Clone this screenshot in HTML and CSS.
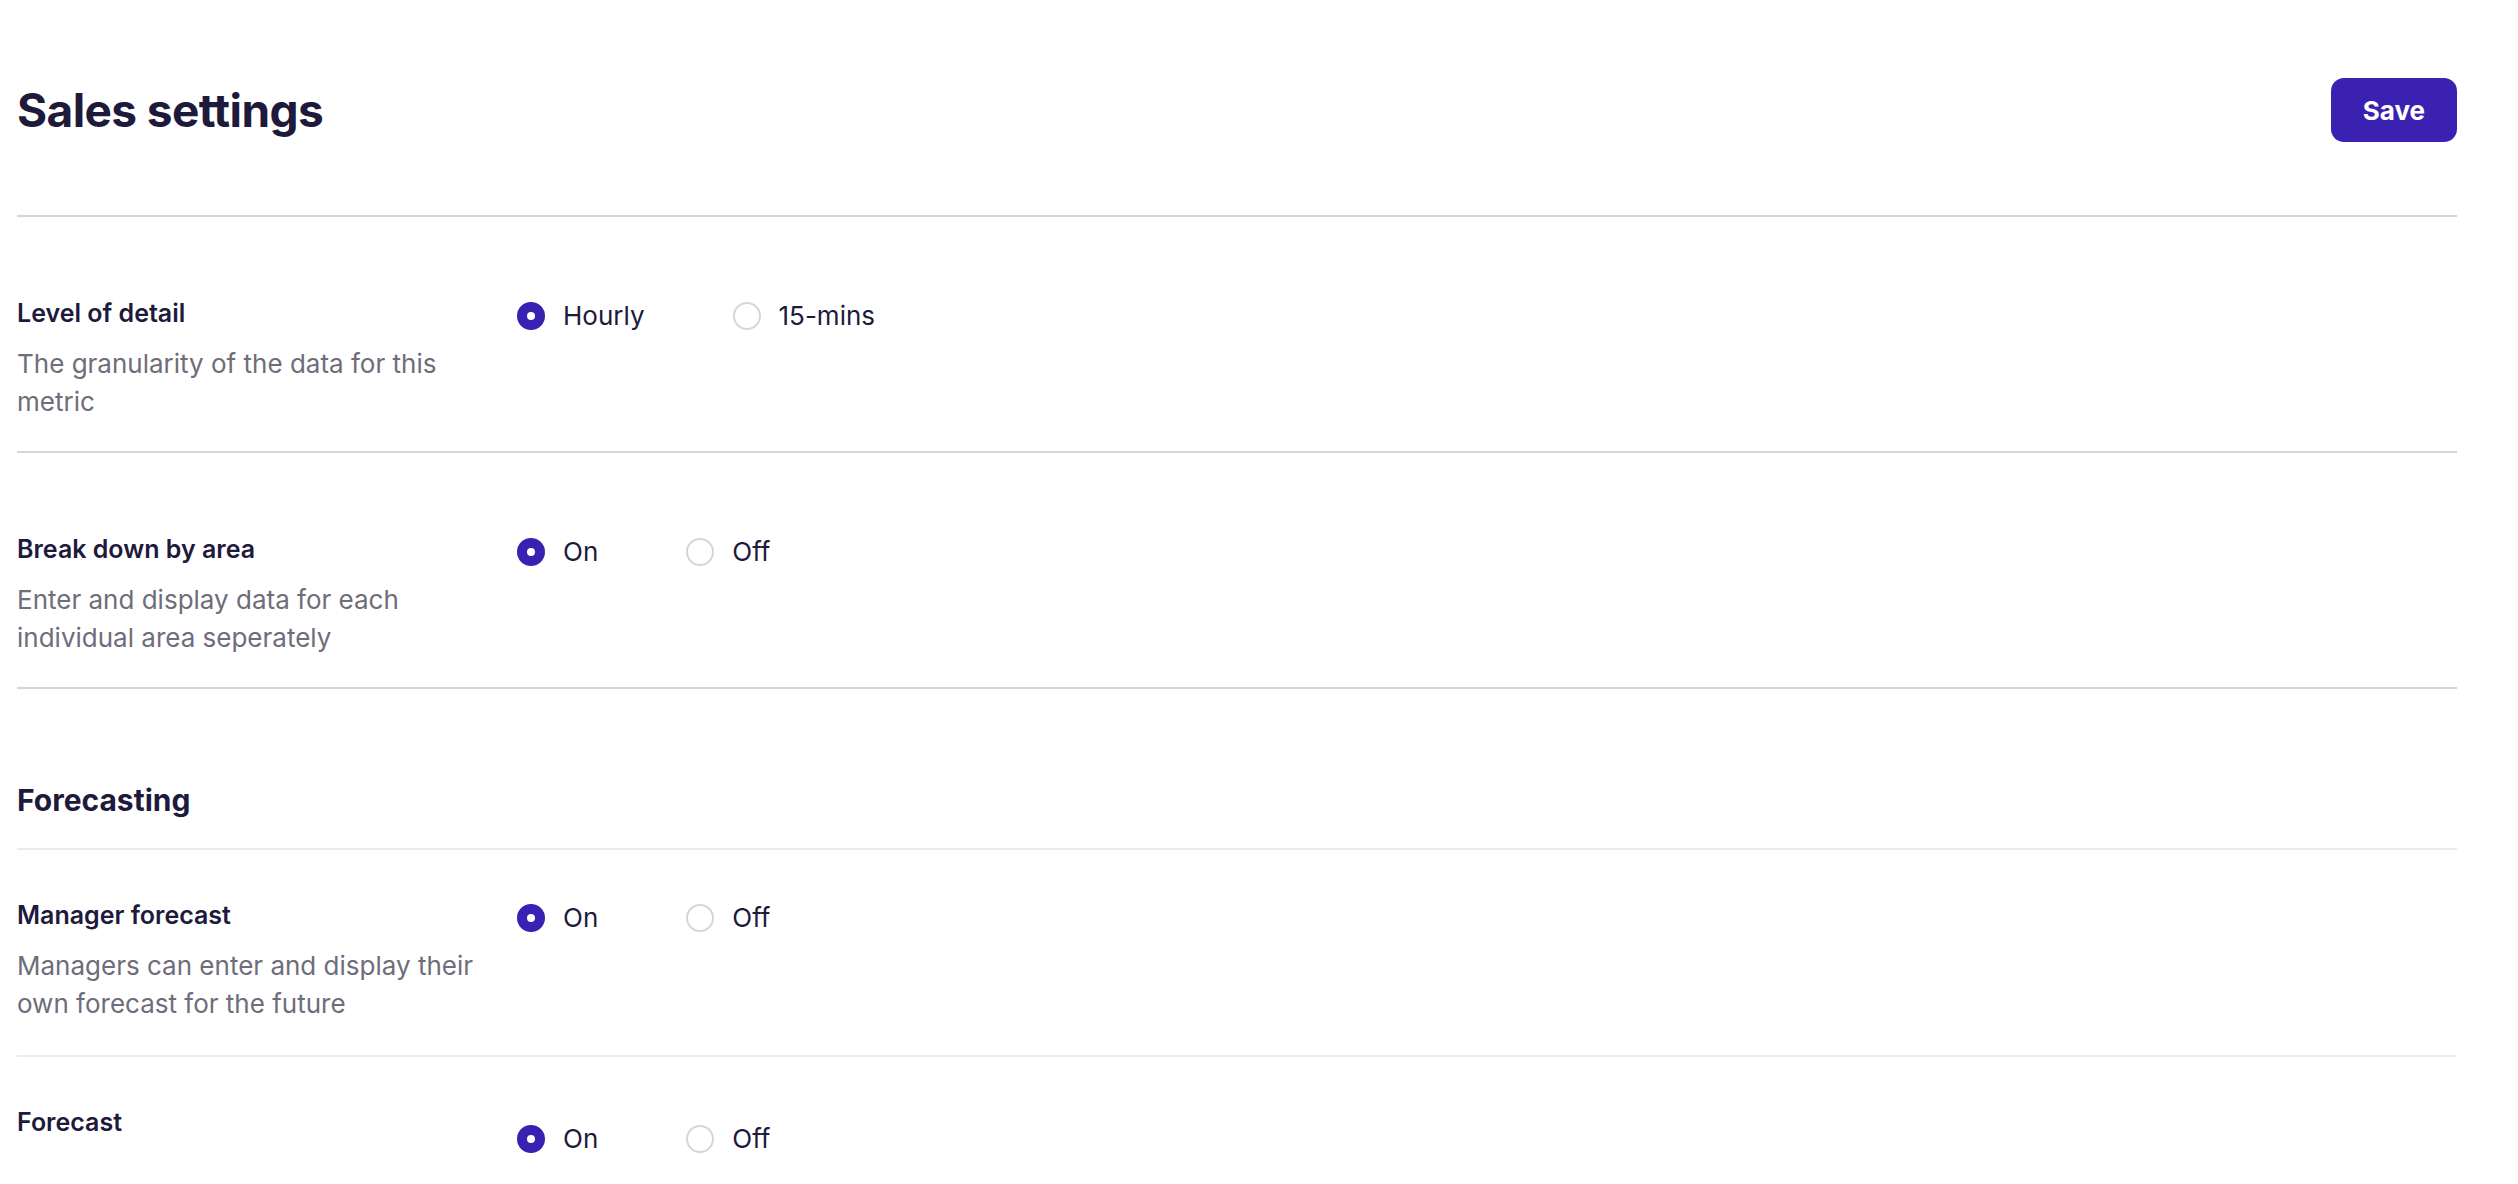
FILE: index.html
```html
<!DOCTYPE html>
<html lang="en">

<head>
    <meta charset="UTF-8">
    <title>Sales settings</title>
    <link rel="stylesheet" href="styles.css">
</head>

<body>
    <div class="page">
        <div class="header">
            <h1 class="title">Sales settings</h1>
            <button class="btn-save">Save</button>
        </div>

        <div class="setting">
            <div class="setting-info">
                <div class="setting-name">Level of detail</div>
                <div class="setting-desc">The granularity of the data for this metric</div>
            </div>
            <div class="options">
                <label class="option"><span class="radio checked"></span>Hourly</label>
                <label class="option"><span class="radio"></span>15-mins</label>
            </div>
        </div>

        <div class="setting">
            <div class="setting-info">
                <div class="setting-name">Break down by area</div>
                <div class="setting-desc">Enter and display data for each individual area seperately</div>
            </div>
            <div class="options">
                <label class="option"><span class="radio checked"></span>On</label>
                <label class="option"><span class="radio"></span>Off</label>
            </div>
        </div>

        <h2 class="section-title">Forecasting</h2>

        <div class="setting setting-sub">
            <div class="setting-info">
                <div class="setting-name">Manager forecast</div>
                <div class="setting-desc">Managers can enter and display their own forecast for the future</div>
            </div>
            <div class="options">
                <label class="option"><span class="radio checked"></span>On</label>
                <label class="option"><span class="radio"></span>Off</label>
            </div>
        </div>

        <div class="setting setting-sub">
            <div class="setting-info">
                <div class="setting-name">Forecast</div>
            </div>
            <div class="options options-low">
                <label class="option"><span class="radio checked"></span>On</label>
                <label class="option"><span class="radio"></span>Off</label>
            </div>
        </div>
    </div>
</body>

</html>
```

FILE: styles.css
```css
* {
    box-sizing: border-box;
}

body {
    margin: 0;
    background: #fff;
    font-family: Inter, "Liberation Sans", sans-serif;
    color: #1e1a3c;
}

.page {
    padding: 0 61px 0 17px;
}

/* header */
.header {
    display: flex;
    justify-content: space-between;
    align-items: center;
    padding: 78px 0 73px;
    border-bottom: 2px solid #d6d5da;
}

.title {
    margin: 0;
    font-size: 46px;
    font-weight: 700;
    line-height: 64px;
    letter-spacing: -0.6px;
}

.btn-save {
    height: 64px;
    padding: 0 32px;
    border: none;
    border-radius: 13px;
    background: #3a21b2;
    color: #fff;
    font-family: inherit;
    font-size: 26px;
    font-weight: 700;
    cursor: pointer;
}

/* rows */
.setting {
    display: grid;
    grid-template-columns: 480px 1fr;
    column-gap: 20px;
    padding: 76px 0 30px;
    border-bottom: 2px solid #d6d5da;
}

.setting-sub {
    padding: 45px 0 32px;
    border-bottom-color: #ebebeb;
}

.setting-sub:last-child {
    border-bottom: none;
}

.setting-name {
    font-size: 25px;
    font-weight: 600;
    line-height: 40px;
}

.setting-desc {
    margin-top: 12px;
    font-size: 26px;
    line-height: 38px;
    color: #6e6d7a;
}

.section-title {
    margin: 0;
    padding: 91px 0 28px;
    font-size: 30px;
    font-weight: 700;
    line-height: 40px;
    border-bottom: 2px solid #ebebeb;
}

/* radios */
.options {
    display: flex;
    align-items: center;
    gap: 88px;
    height: 40px;
    margin-top: 3px;
}

.options-low {
    margin-top: 17px;
}

.option {
    display: flex;
    align-items: center;
    gap: 18px;
    font-size: 26px;
    line-height: 40px;
    cursor: pointer;
}

.radio {
    position: relative;
    width: 28px;
    height: 28px;
    border: 2px solid #d6d5da;
    border-radius: 50%;
    background: #fff;
}

.radio.checked {
    border-color: #3a21b2;
    background: #3a21b2;
}

.radio.checked:after {
    content: "";
    position: absolute;
    left: 8px;
    top: 8px;
    width: 8px;
    height: 8px;
    border-radius: 50%;
    background: #fff;
}
```
